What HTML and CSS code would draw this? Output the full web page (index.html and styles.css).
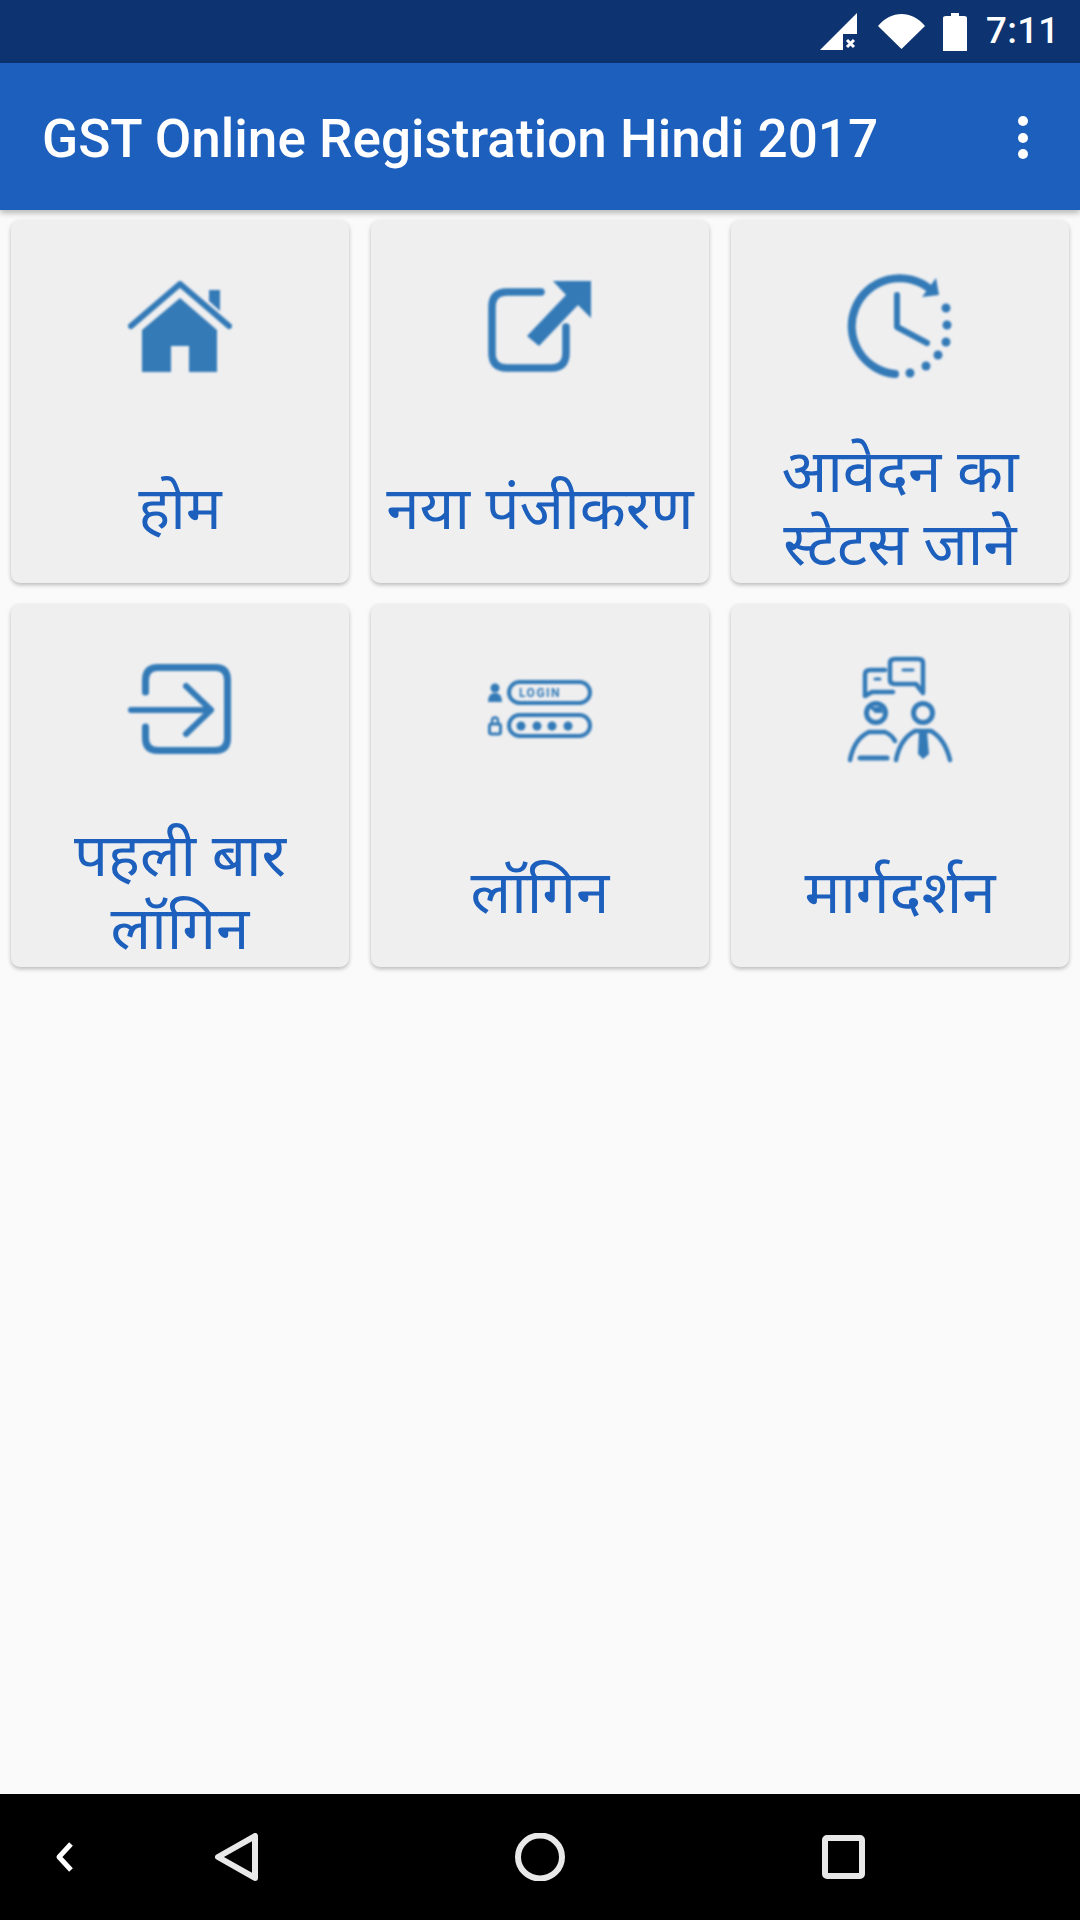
FILE: index.html
```html
<!DOCTYPE html>
<html lang="hi">
<head>
<meta charset="utf-8">
<title>GST Online Registration Hindi 2017</title>
<link rel="stylesheet" href="styles.css">
</head>
<body>
<div class="screen">
  <header class="status">
    <svg class="st-signal" viewBox="0 0 37 37"><path d="M37 0V21H23V37H0Z"/><path class="thin" d="M27 27l7 7m0-7l-7 7"/></svg>
    <svg class="st-wifi" viewBox="0 0 47 35"><path d="M0 12C13 -4 34 -4 47 12L23.500 35Z"/></svg>
    <svg class="st-batt" viewBox="0 0 24 38"><path d="M5 3H8V0H16V3H21Q24 3 24 5V38H0V5Q0 3 3 3Z"/></svg>
    <span class="st-time">7:11</span>
  </header>
  <div class="appbar">
    <h1 class="title">GST Online Registration Hindi 2017</h1>
    <div class="overflow"><i></i><i></i><i></i></div>
  </div>
  <main class="grid">
    <a class="card">
      <svg class="icon" viewBox="0 0 110 110">
        <path class="fill" d="M84 19H95V40L84 30Z"/>
        <path class="line" d="M6 55L55 13L104 55" stroke-width="6"/>
        <path class="fill" d="M17 59L55 27L92 59V101H64V75H46V101H17Z"/>
      </svg>
      <span class="label">होम</span>
    </a>
    <a class="card">
      <svg class="icon" viewBox="0 0 110 110">
        <path class="line" d="M56 21H22Q7 21 7 36V82Q7 97 22 97H66Q81 97 81 82V56" stroke-width="7.500"/>
        <path class="fill" d="M106 10V47L93 34L54 75L42 65L81 24L68 10Z"/>
      </svg>
      <span class="label">नया पंजीकरण</span>
    </a>
    <a class="card">
      <svg class="icon" viewBox="0 0 110 110">
        <path class="line" d="M50 103A48 48 0 1 1 85 18" stroke-width="8"/>
        <path class="fill" d="M91 7L94 24L77 26Z"/>
        <path class="line" d="M52 24V56L82 72" stroke-width="6"/>
        <g class="fill"><circle cx="101" cy="37" r="4.500"/><circle cx="102" cy="54" r="4.500"/><circle cx="101" cy="71" r="4.500"/><circle cx="93" cy="84" r="4.500"/><circle cx="81" cy="95" r="4.500"/><circle cx="65" cy="102" r="4.500"/></g>
      </svg>
      <span class="label">आवेदन का स्टेटस जाने</span>
    </a>
    <a class="card">
      <svg class="icon" viewBox="0 0 110 110">
        <path class="line" d="M20.500 37V25Q20.500 12.500 33 12.500H90Q102.500 12.500 102.500 25V83Q102.500 95.500 90 95.500H33Q20.500 95.500 20.500 83V72" stroke-width="7"/>
        <path class="line" d="M6 55H86M61 31L86 55L61 79" stroke-width="6"/>
      </svg>
      <span class="label">पहली बार लॉगिन</span>
    </a>
    <a class="card">
      <svg class="icon" viewBox="0 0 110 110">
        <rect class="line" x="24" y="27" width="81" height="21" rx="10.500" stroke-width="4"/>
        <rect class="line" x="24" y="60" width="81" height="21" rx="10.500" stroke-width="4"/>
        <text class="pill-text" x="34" y="42">LOGIN</text>
        <g class="fill">
          <circle cx="10" cy="33" r="4.500"/><path d="M3 47Q3 38 10 38Q17 38 17 47Z"/>
          <circle cx="36" cy="71" r="4.500"/><circle cx="52" cy="71" r="4.500"/><circle cx="67" cy="71" r="4.500"/><circle cx="83" cy="71" r="4.500"/>
        </g>
        <rect class="line" x="4.500" y="69" width="11" height="10" rx="2" stroke-width="3"/>
        <path class="line" d="M7 69V66Q7 62.500 10 62.500Q13 62.500 13 66V69" stroke-width="2.500"/>
      </svg>
      <span class="label">लॉगिन</span>
    </a>
    <a class="card">
      <svg class="icon" viewBox="0 0 110 110">
        <path class="line" d="M78 38L71 29H50Q45 29 45 25V8Q45 4 50 4H73Q78 4 78 8Z" stroke-width="4.500"/>
        <path class="line" d="M58 15H68" stroke-width="3"/>
        <path class="line" d="M40 15H25Q20 15 20 20V41L27 37H48" stroke-width="4.500"/>
        <path class="line" d="M30 24H35" stroke-width="3"/>
        <circle class="line" cx="31" cy="58" r="9.500" stroke-width="5"/>
        <circle class="line" cx="78" cy="58" r="9.500" stroke-width="5"/>
        <path class="fill" d="M24 52H36L38 58H30Z"/>
        <path class="line" d="M5 105Q9 84 24 77H40Q47 80 50 86" stroke-width="4.500"/>
        <path class="line" d="M15 103H42" stroke-width="5"/>
        <path class="line" d="M51 105Q55 84 70 76H86Q100 84 105 105" stroke-width="4.500"/>
        <path class="fill" d="M74 76H82L84 99L78 104L73 99Z"/>
      </svg>
      <span class="label">मार्गदर्शन</span>
    </a>
  </main>
  <footer class="navbar">
    <svg class="nav-chevron" viewBox="0 0 19 30"><path d="M16 2L4 15L16 28"/></svg>
    <svg class="nav-back" viewBox="0 0 43 48"><path d="M40 3V45L3 24Z"/></svg>
    <svg class="nav-home" viewBox="0 0 50 48"><ellipse cx="25" cy="24" rx="22" ry="21.500"/></svg>
    <svg class="nav-recent" viewBox="0 0 43 44"><rect x="3" y="3" width="37" height="38" rx="2"/></svg>
  </footer>
</div>
</body>
</html>
```
FILE: styles.css
```css
* { box-sizing: border-box; }
html, body { margin: 0; padding: 0; }
body { font-family: "Noto Sans Devanagari", "Noto Sans", Roboto, sans-serif; background: #fafafa; }
.screen { width: 1080px; height: 1920px; display: flex; flex-direction: column; overflow: hidden; }

.status { height: 63px; flex: none; background: #0d3370; display: flex; align-items: center; color: #fff; padding-left: 820px; }
.status svg { fill: #fff; flex: none; display: block; }
.st-signal { width: 37px; height: 37px; }
.st-signal .thin { fill: none; stroke: #fff; stroke-width: 3; }
.st-wifi { width: 47px; height: 35px; margin-left: 21px; }
.st-batt { width: 24px; height: 38px; margin-left: 18px; }
.st-time { font: 500 36.750px/1 Roboto, sans-serif; margin-left: 19px; letter-spacing: 0.3px; }

.appbar { height: 147px; flex: none; background: #1c5fbd; display: flex; align-items: center; justify-content: space-between; padding: 0 52px 0 42px; box-shadow: 0 3px 6px rgba(0,0,0,.28); position: relative; z-index: 1; }
.title { margin: 0; padding-top: 7px; color: #fff; font: 500 53.100px/1 Roboto, sans-serif; white-space: nowrap; }
.overflow { display: flex; flex-direction: column; gap: 6.500px; padding-top: 2px; }
.overflow i { display: block; width: 10px; height: 10px; border-radius: 50%; background: #fff; }

.grid { flex: 1; display: grid; grid-template-columns: repeat(3, 338px); grid-auto-rows: 363px; gap: 21px 22px; padding: 10px 11px 0; }
.card { background: #efeff0; border-radius: 9px; box-shadow: 0 2px 4px rgba(0,0,0,.26); display: flex; flex-direction: column; align-items: center; padding: 51px 8px 0; }
.icon { width: 110px; height: 110px; flex: none; display: block; filter: blur(.8px); }
.fill { fill: #337ab7; }
.line { fill: none; stroke: #337ab7; stroke-linejoin: round; stroke-linecap: round; }
.pill-text { font: 700 12px Roboto, sans-serif; fill: #337ab7; letter-spacing: 1.500px; }
.label { margin-top: 60px; height: 146px; flex: none; display: flex; align-items: center; justify-content: center; text-align: center; color: #1c5fbd; font-size: 60px; line-height: 73px; }

.navbar { height: 126px; flex: none; background: #000; display: flex; align-items: center; }
.navbar svg { flex: none; display: block; fill: none; stroke: #e8e8e8; stroke-width: 6; stroke-linejoin: round; }
.nav-chevron { width: 19px; height: 30px; margin-left: 55px; margin-top: -1px; stroke: #fff !important; stroke-width: 5 !important; }
.nav-back { width: 43px; height: 48px; margin-left: 141px; }
.nav-home { width: 50px; height: 48px; margin-left: 257px; }
.nav-recent { width: 43px; height: 44px; margin-left: 257px; }
```
